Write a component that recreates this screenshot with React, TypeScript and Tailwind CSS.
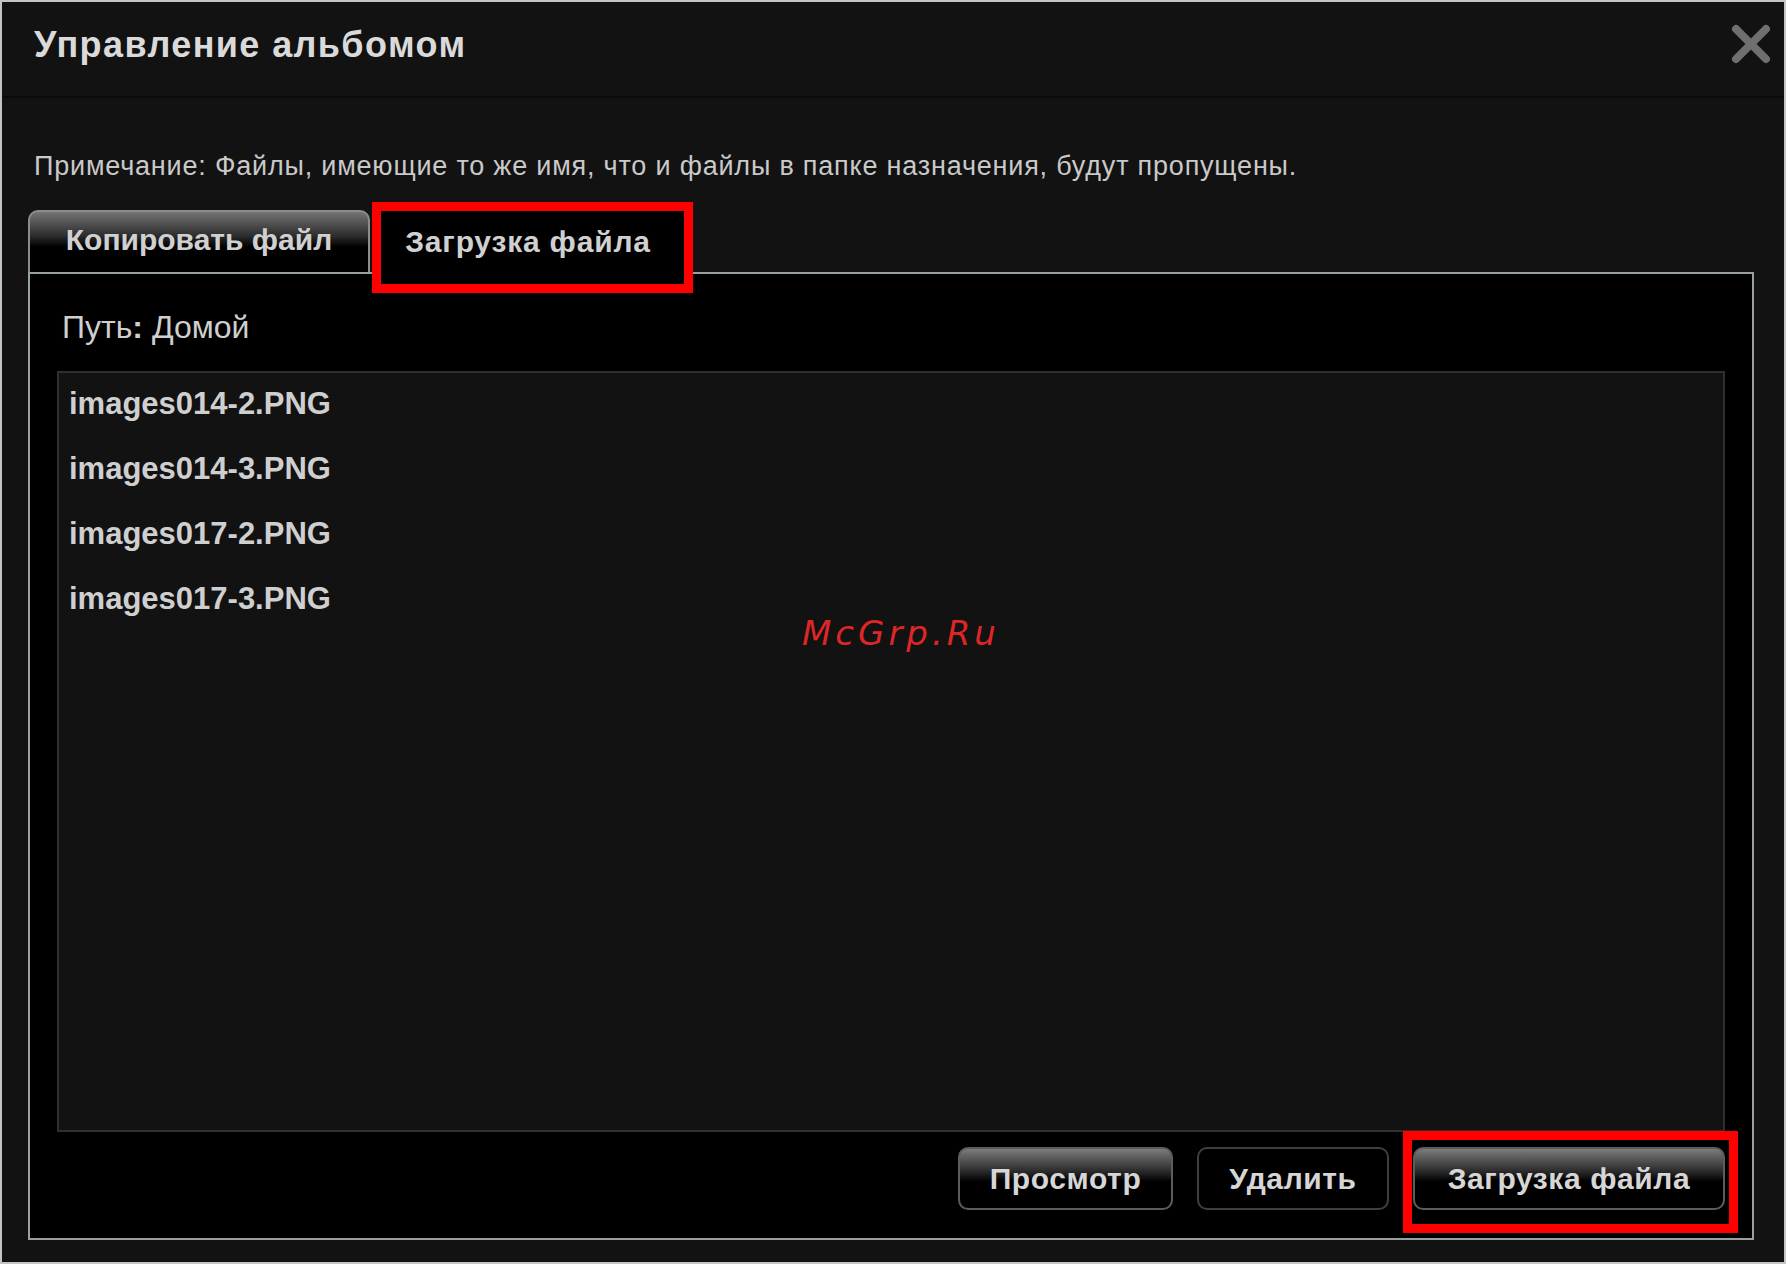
import React from 'react'

const files = [
  'images014-2.PNG',
  'images014-3.PNG',
  'images017-2.PNG',
  'images017-3.PNG'
]

const CloseIcon = () => (
  <svg width="42" height="42" viewBox="0 0 42 42" className="text-[#6f6f6f]">
    <path
      d="M6 6 L36 36 M36 6 L6 36"
      stroke="currentColor"
      strokeWidth="8"
      strokeLinecap="round"
    />
  </svg>
)

const Button = ({
  label,
  flat,
  width
}: {
  label: string
  flat?: boolean
  width: string
}) => (
  <button
    className={`${width} h-[63px] rounded-[10px] border-2 text-[30px] font-bold leading-none tracking-[0.6px] text-[#d6d6d6] ${
      flat
        ? 'border-[#3f3f3f] bg-black'
        : 'border-[#5c5c5c] bg-[linear-gradient(to_bottom,#7c7c7c_0%,#2a2a2a_38%,#000_55%,#000_100%)]'
    }`}
  >
    {label}
  </button>
)

export default function App() {
  return (
    <div className="w-[1786px] h-[1264px] bg-[#dcdcdc] font-['Liberation_Sans',Arial,sans-serif]">
      <div className="flex h-full w-full flex-col border-2 border-[#c4c4c4] bg-[#121212]">
        {/* header */}
        <div className="flex h-[96px] items-start justify-between border-b-2 border-[#0b0b0b] pl-[32px] pr-[12px]">
          <div className="pt-[25px] text-[36px] font-bold leading-none tracking-[1.4px] text-[#dadada]">
            Управление альбомом
          </div>
          <div className="mt-[21px]">
            <CloseIcon />
          </div>
        </div>

        <div className="mt-[55px] pl-[32px] text-[27px] leading-none tracking-[0.8px] text-[#c9c9c9]">
          Примечание: Файлы, имеющие то же имя, что и файлы в папке назначения, будут пропущены.
        </div>

        {/* tabs */}
        <div className="mt-[30px] flex items-end pl-[26px]">
          <div className="h-[62px] w-[342px] rounded-t-[10px] border-2 border-b-0 border-[#8c8c8c] bg-[linear-gradient(to_bottom,#747474_0%,#2c2c2c_40%,#000_58%,#000_100%)] pt-[13px] text-center text-[30px] font-bold leading-none text-[#d0d0d0]">
            Копировать файл
          </div>
          <div className="relative z-10 -mb-[2px] ml-[2px] h-[64px] w-[318px] bg-black pr-[6px] pt-[17px] text-center text-[30px] font-bold leading-none tracking-[0.8px] text-[#d0d0d0]">
            Загрузка файла
            <div className="absolute -top-[8px] left-0 -right-[3px] -bottom-[19px] border-[9px] border-[#ff0000]" />
          </div>
        </div>

        {/* panel */}
        <div className="mb-[22px] ml-[26px] mr-[30px] flex flex-1 flex-col border-2 border-[#98a0a0] bg-black px-[27px] pb-[28px]">
          <div className="mt-[37px] pl-[5px] text-[32px] leading-none text-[#cfcfcf]">
            Путь<span className="font-bold">:</span> Домой
          </div>

          <div className="relative mt-[28px] flex flex-1 flex-col gap-[35px] border-2 border-[#2f2f2f] bg-[#121212] pl-[10px] pt-[16px]">
            {files.map((f) => (
              <div key={f} className="text-[31px] font-bold leading-[30px] text-[#cfcfcf]">
                {f}
              </div>
            ))}
            <div className="absolute left-[743px] top-[243px] font-['DejaVu_Sans',sans-serif] text-[34px] italic leading-none tracking-[4px] text-[#dd2626]">
              McGrp.Ru
            </div>
          </div>

          <div className="mt-[15px] flex justify-end gap-[24px]">
            <Button label="Просмотр" width="w-[215px]" />
            <Button label="Удалить" width="w-[192px]" flat />
            <div className="relative">
              <Button label="Загрузка файла" width="w-[312px]" />
              <div className="absolute -top-[16px] -left-[10px] -right-[13px] -bottom-[23px] border-[9px] border-[#ff0000]" />
            </div>
          </div>
        </div>
      </div>
    </div>
  )
}
